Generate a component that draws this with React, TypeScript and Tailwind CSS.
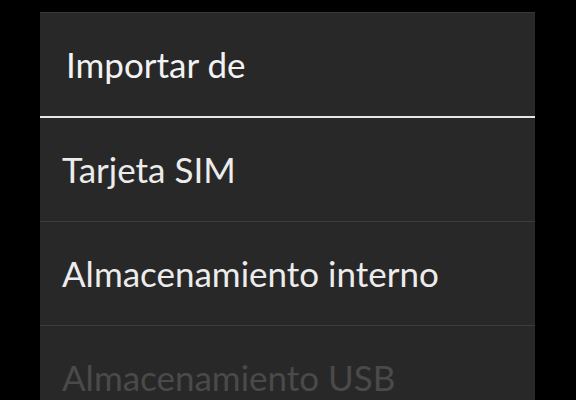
export default function App() {
  const items = [
    { label: 'Tarjeta SIM', enabled: true },
    { label: 'Almacenamiento interno', enabled: true },
    { label: 'Almacenamiento USB', enabled: false },
  ];

  return (
    <div className="h-[400px] w-[576px] overflow-hidden bg-black pt-[12px] pl-[40px]" style={{ fontFamily: 'Lato, "Open Sans", sans-serif' }}>
      <div className="w-[495px] bg-[#282828] border-t border-[#383838]">
        <div className="h-[103px] flex items-center pl-[26px] text-[35px] text-[#f2f2f2]">Importar de</div>
        <div className="h-[2px] bg-[#e6e6e6]" />
        {items.map((it) => (
          <div
            key={it.label}
            className={`h-[104px] flex items-center pl-[22px] text-[35px] border-b border-[#3c3c3c] ${it.enabled ? 'text-[#ececec]' : 'text-[#4a4a4a]'}`}
          >
            {it.label}
          </div>
        ))}
      </div>
    </div>
  );
}
